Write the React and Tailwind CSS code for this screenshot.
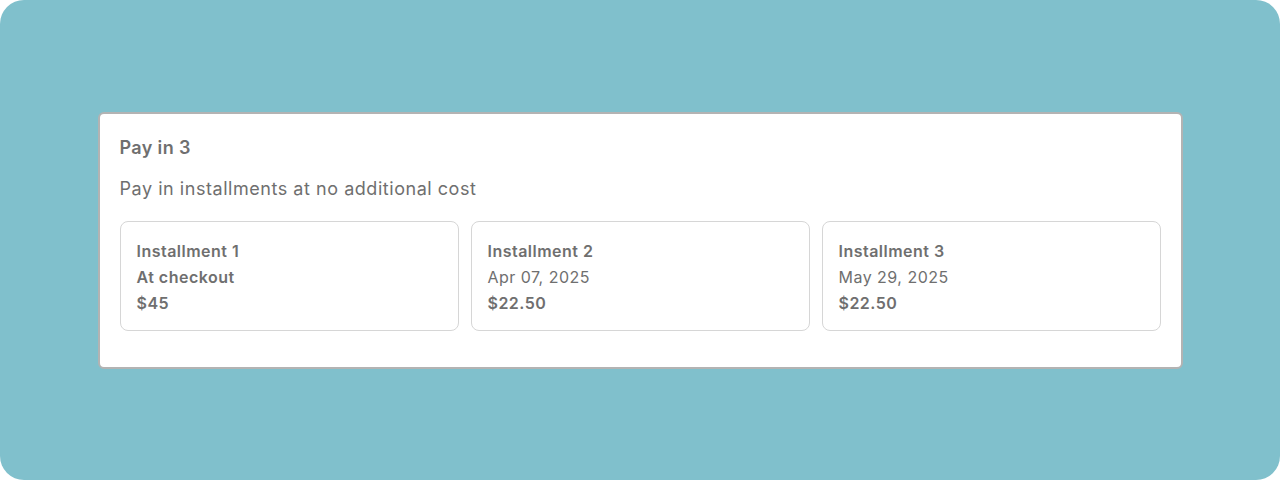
const installments = [
  { title: "Installment 1", when: "At checkout", whenBold: true, amount: "$45" },
  { title: "Installment 2", when: "Apr 07, 2025", amount: "$22.50" },
  { title: "Installment 3", when: "May 29, 2025", amount: "$22.50" },
];

function InstallmentCard({ item }) {
  return (
    <div className="rounded-lg border border-[#d6d6d6] bg-white px-4 pt-4 pb-[14px] text-[16px] leading-[26px] tracking-[0.03em] text-[#6f6f6f]">
      <p className="font-semibold">{item.title}</p>
      <p className={item.whenBold ? "font-semibold" : "font-normal"}>
        {item.when}
      </p>
      <p className="font-semibold">{item.amount}</p>
    </div>
  );
}

export default function App() {
  return (
    <div
      className="flex h-[480px] w-[1280px] items-center justify-center rounded-3xl bg-[#80c0cc]"
      style={{ fontFamily: "Inter, 'Noto Sans', sans-serif" }}
    >
      <div className="w-[1085px] rounded-md border-2 border-[#b3b3b3] bg-white px-5 pt-5 pb-9">
        <h2 className="text-[18px] leading-7 font-semibold tracking-[0.02em] text-[#6f6f6f]">
          Pay in 3
        </h2>
        <p className="mt-[13px] text-[18px] leading-7 tracking-[0.03em] text-[#6f6f6f]">
          Pay in installments at no additional cost
        </p>
        <div className="mt-[18px] grid grid-cols-3 gap-3">
          {installments.map((item) => (
            <InstallmentCard key={item.title} item={item} />
          ))}
        </div>
      </div>
    </div>
  );
}
